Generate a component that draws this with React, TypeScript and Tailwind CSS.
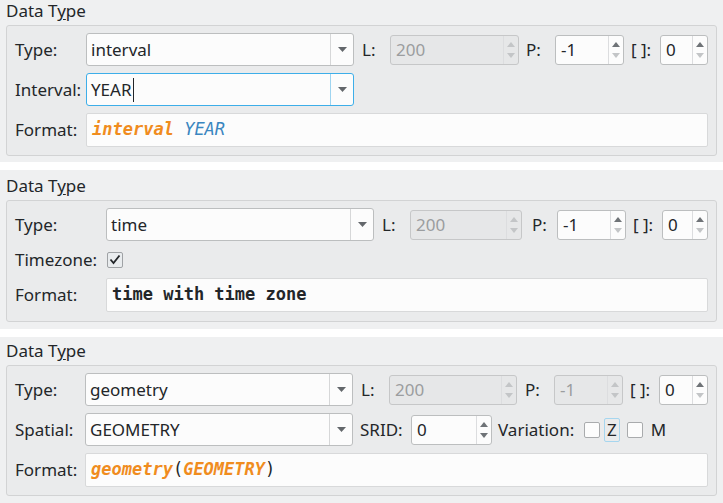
import React from 'react';

type Kids = { children?: React.ReactNode };

function Arrow({ dir, dim }: { dir: 'up' | 'down'; dim?: boolean }) {
  return (
    <svg width="8" height="5" viewBox="0 0 8 5" className={dim ? 'text-[#c3c5c7]' : 'text-[#6f7377]'}>
      <path d={dir === 'up' ? 'M0 5 L4 0 L8 5 Z' : 'M0 0 L8 0 L4 5 Z'} fill="currentColor" />
    </svg>
  );
}

function Combo({ value, focus, cursor, className = '' }: { value: string; focus?: boolean; cursor?: boolean; className?: string }) {
  return (
    <div
      className={`flex h-[33px] items-stretch rounded-[3px] border bg-[#fcfcfc] ${
        focus ? 'border-[#3daee9]' : 'border-[#bcbebf]'
      } ${className}`}
    >
      <div className="flex flex-1 items-center pl-[4px]">
        {value}
        {cursor && <span className="ml-[1px] h-[24px] w-px bg-[#232629]" />}
      </div>
      <div className={`flex w-[23px] items-center justify-center border-l ${focus ? 'border-[#9ed4f0]' : 'border-[#d6d7d8]'}`}>
        <svg width="9" height="5" viewBox="0 0 9 5">
          <path d="M0 0 L9 0 L4.5 5 Z" fill="#63676b" />
        </svg>
      </div>
    </div>
  );
}

function Spin({
  value,
  disabled,
  downDim,
  className = '',
}: {
  value: string;
  disabled?: boolean;
  downDim?: boolean;
  className?: string;
}) {
  return (
    <div
      className={`flex h-[30px] items-stretch rounded-[3px] border ${
        disabled ? 'border-[#c6c7c8] bg-[#e6e7e8] text-[#9b9d9f]' : 'border-[#bcbebf] bg-[#fcfcfc]'
      } ${className}`}
    >
      <div className="flex flex-1 items-center pl-[5px]">{value}</div>
      <div className="flex w-[15px] flex-col items-center justify-center gap-[6px] border-l border-[#dcdddf]">
        <Arrow dir="up" dim={disabled} />
        <Arrow dir="down" dim={disabled || downDim} />
      </div>
    </div>
  );
}

function Check({ checked }: { checked?: boolean }) {
  return (
    <div
      className={`flex h-[16px] w-[16px] items-center justify-center rounded-[2px] border ${
        checked ? 'border-[#9fa2a5] bg-[#e9ecee]' : 'border-[#a9abad] bg-[#fcfcfc]'
      }`}
    >
      {checked && (
        <svg width="12" height="11" viewBox="0 0 12 11">
          <path d="M1.5 5.5 L4.5 9 L10.5 1.5" fill="none" stroke="#232629" strokeWidth="1.8" />
        </svg>
      )}
    </div>
  );
}

function Format({ children }: Kids) {
  return (
    <div className="flex h-[34px] flex-1 items-center rounded-[2px] border border-[#d8d9da] bg-[#fcfcfc] pl-[5px] font-['DejaVu_Sans_Mono',monospace] text-[17px]">
      {children}
    </div>
  );
}

function Panel({ pad, children }: Kids & { pad: string }) {
  return (
    <section className={`bg-[#eff0f1] px-[6px] ${pad}`}>
      <div className="h-[20px] leading-[20px]">
        Data T<span className="underline underline-offset-2">y</span>pe
      </div>
      <div className="mt-[4px] flex flex-col gap-[7px] rounded-[3px] border border-[#d2d3d4] bg-[#eaebec] px-[8px] pt-[7px]">
        {children}
      </div>
    </section>
  );
}

function TypeRow({
  labelW,
  type,
  lW,
  pW,
  bW,
  pPad,
  pDisabled,
}: {
  labelW: string;
  type: string;
  lW: string;
  pW: string;
  bW: string;
  pPad: string;
  pDisabled?: boolean;
}) {
  return (
    <div className="flex h-[33px] items-center">
      <span className={labelW}>Type:</span>
      <Combo value={type} className="flex-1" />
      <span className="w-[36px] pl-[8px]">L:</span>
      <Spin value="200" disabled className={lW} />
      <span className={pPad}>P:</span>
      <Spin value="-1" disabled={pDisabled} downDim className={pW} />
      <span className="w-[36px] pl-[7px]">[ ]:</span>
      <Spin value="0" downDim className={bW} />
    </div>
  );
}

export default function App() {
  return (
    <div className="flex h-[503px] w-[723px] flex-col gap-[8px] overflow-hidden bg-white font-['Noto_Sans',sans-serif] text-[17px] text-[#232629]">
      <Panel pad="pt-[1px] pb-[6px]">
        <TypeRow labelW="w-[71px]" type="interval" lW="w-[129px]" pW="w-[69px]" bW="w-[48px]" pPad="w-[36px] pl-[7px]" />
        <div className="flex h-[33px] items-center">
          <span className="w-[71px]">Interval:</span>
          <Combo value="YEAR" focus cursor className="w-[268px]" />
        </div>
        <div className="mb-[8px] flex items-center">
          <span className="w-[71px]">Format:</span>
          <Format>
            <span className="font-bold italic text-[#f08c1e]">interval</span>
            <span>&nbsp;</span>
            <span className="italic text-[#3a86c0]">YEAR</span>
          </Format>
        </div>
      </Panel>

      <Panel pad="pt-[6px] pb-[7px]">
        <TypeRow labelW="w-[91px]" type="time" lW="w-[112px]" pW="w-[69px]" bW="w-[46px]" pPad="w-[35px] pl-[10px]" />
        <div className="flex h-[23px] items-center">
          <span className="w-[91px]">Timezone:</span>
          <div className="ml-[1px]">
            <Check checked />
          </div>
        </div>
        <div className="mb-[9px] flex items-center">
          <span className="w-[91px]">Format:</span>
          <Format>
            <span className="font-bold">time with time zone</span>
          </Format>
        </div>
      </Panel>

      <Panel pad="pt-[4px] pb-[7px]">
        <TypeRow labelW="w-[70px]" type="geometry" lW="w-[128px]" pW="w-[69px]" bW="w-[49px]" pPad="w-[37px] pl-[8px]" pDisabled />
        <div className="flex h-[33px] items-center">
          <span className="w-[70px]">Spatial:</span>
          <Combo value="GEOMETRY" className="w-[268px]" />
          <span className="w-[58px] pl-[7px]">SRID:</span>
          <Spin value="0" className="w-[81px]" />
          <span className="w-[92px] pl-[6px]">Variation:</span>
          <Check />
          <span className="ml-[4px] flex h-[24px] items-center rounded-[2px] border border-[#a6d6ef] px-[2px]">Z</span>
          <div className="ml-[7px]">
            <Check />
          </div>
          <span className="ml-[8px]">M</span>
        </div>
        <div className="mb-[8px] flex items-center">
          <span className="w-[70px]">Format:</span>
          <Format>
            <span className="font-bold italic text-[#f08c1e]">geometry</span>
            <span>(</span>
            <span className="font-bold italic text-[#f08c1e]">GEOMETRY</span>
            <span>)</span>
          </Format>
        </div>
      </Panel>
    </div>
  );
}
